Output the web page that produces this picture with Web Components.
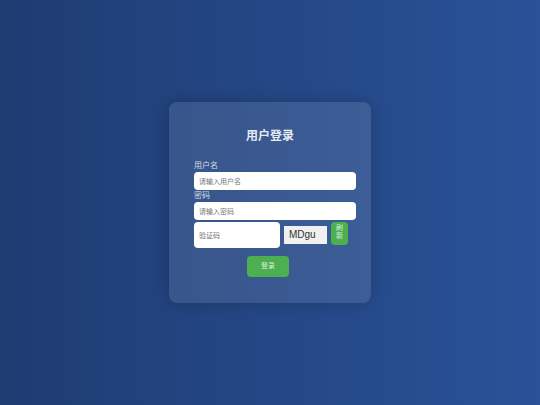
<!DOCTYPE html>
<html lang="zh-CN">
<head>
<meta charset="UTF-8">
<meta name="viewport" content="width=device-width, initial-scale=1.0">
<title>用户登录</title>
<style>
body {
  margin: 0;
  min-height: 100vh;
  display: flex;
  justify-content: center;
  align-items: center;
  background: linear-gradient(to right, #1e3c72, #2a5298);
  font-family: "Liberation Sans", "Noto Sans CJK SC", sans-serif;
}
</style>
</head>
<body>
<login-card>
  <span slot="title">用户登录</span>
  <text-field name="username" label="用户名" placeholder="请输入用户名"></text-field>
  <text-field name="password" type="password" label="密码" placeholder="请输入密码"></text-field>
  <captcha-field code="MDgu"></captcha-field>
  <action-button slot="actions">登录</action-button>
</login-card>

<script>
const inputStyles = `
  input {
    box-sizing: border-box;
    min-width: 0;
    margin: 0;
    padding: 0 5px;
    border: none;
    border-radius: 4px;
    background: #fff;
    color: #333;
    font: inherit;
    font-size: 7px;
  }
  input::placeholder {
    color: #757575;
  }
`;

const cardTemplate = document.createElement('template');
cardTemplate.innerHTML = `
<style>
:host {
  display: block;
  box-sizing: border-box;
  width: 202px;
  max-width: 100%;
  padding: 26px 0;
  border-radius: 8px;
  background: rgba(255, 255, 255, 0.1);
  box-shadow: 0 0 16px rgba(0, 0, 0, 0.2);
  color: #fff;
}
h2 {
  margin: 0 0 16px;
  font-size: 12px;
  line-height: 16px;
  text-align: center;
  color: rgba(255, 255, 255, 0.9);
}
form {
  display: flex;
  flex-direction: column;
  padding: 0 15px 0 25px;
}
.actions {
  display: flex;
  justify-content: center;
  margin: 8px 14px 0 0;
}
</style>
<h2><slot name="title"></slot></h2>
<form>
  <slot></slot>
  <div class="actions"><slot name="actions"></slot></div>
</form>
`;

class LoginCard extends HTMLElement {
  constructor() {
    super();
    this.attachShadow({ mode: 'open' });
    this.shadowRoot.appendChild(cardTemplate.content.cloneNode(true));
  }
}
window.customElements.define('login-card', LoginCard);

const fieldTemplate = document.createElement('template');
fieldTemplate.innerHTML = `
<style>
${inputStyles}
:host {
  display: flex;
  flex-direction: column;
}
label {
  font-size: 8px;
  line-height: 12px;
  color: rgba(255, 255, 255, 0.8);
}
input {
  width: 100%;
  height: 18px;
}
</style>
<label for="field"></label>
<input id="field">
`;

class TextField extends HTMLElement {
  constructor() {
    super();
    this.attachShadow({ mode: 'open' });
    this.shadowRoot.appendChild(fieldTemplate.content.cloneNode(true));
  }

  connectedCallback() {
    const input = this.shadowRoot.querySelector('input');
    this.shadowRoot.querySelector('label').textContent = this.getAttribute('label');
    input.type = this.getAttribute('type') || 'text';
    input.name = this.getAttribute('name');
    input.placeholder = this.getAttribute('placeholder');
  }
}
window.customElements.define('text-field', TextField);

const buttonTemplate = document.createElement('template');
buttonTemplate.innerHTML = `
<style>
:host {
  display: block;
}
button {
  display: block;
  margin: 0;
  padding: 6px 14px 7px;
  border: none;
  border-radius: 4px;
  background: #4caf50;
  color: rgba(255, 255, 255, 0.8);
  font: inherit;
  font-size: 7px;
  line-height: 8px;
  cursor: pointer;
}
/* narrow enough for one character on each line */
:host([narrow]) button {
  width: 17px;
  padding: 2px 5px 5px;
}
</style>
<button type="button"><slot></slot></button>
`;

class ActionButton extends HTMLElement {
  constructor() {
    super();
    this.attachShadow({ mode: 'open' });
    this.shadowRoot.appendChild(buttonTemplate.content.cloneNode(true));
  }
}
window.customElements.define('action-button', ActionButton);

const captchaTemplate = document.createElement('template');
captchaTemplate.innerHTML = `
<style>
${inputStyles}
:host {
  display: flex;
  gap: 4px;
  margin-top: 2px;
  padding-right: 8px;
}
input {
  flex: 1;
  height: 26px;
}
.code {
  align-self: center;
  box-sizing: border-box;
  width: 43px;
  padding: 0 5px;
  background: #f0f0f0;
  color: #333;
  font-size: 10px;
  line-height: 18px;
}
</style>
<input type="text" name="captcha" placeholder="验证码" aria-label="验证码">
<span class="code"></span>
<action-button narrow>刷新</action-button>
`;

class CaptchaField extends HTMLElement {
  constructor() {
    super();
    this.attachShadow({ mode: 'open' });
    this.shadowRoot.appendChild(captchaTemplate.content.cloneNode(true));
  }

  connectedCallback() {
    this.shadowRoot.querySelector('.code').textContent = this.getAttribute('code');
  }
}
window.customElements.define('captcha-field', CaptchaField);
</script>
</body>
</html>
